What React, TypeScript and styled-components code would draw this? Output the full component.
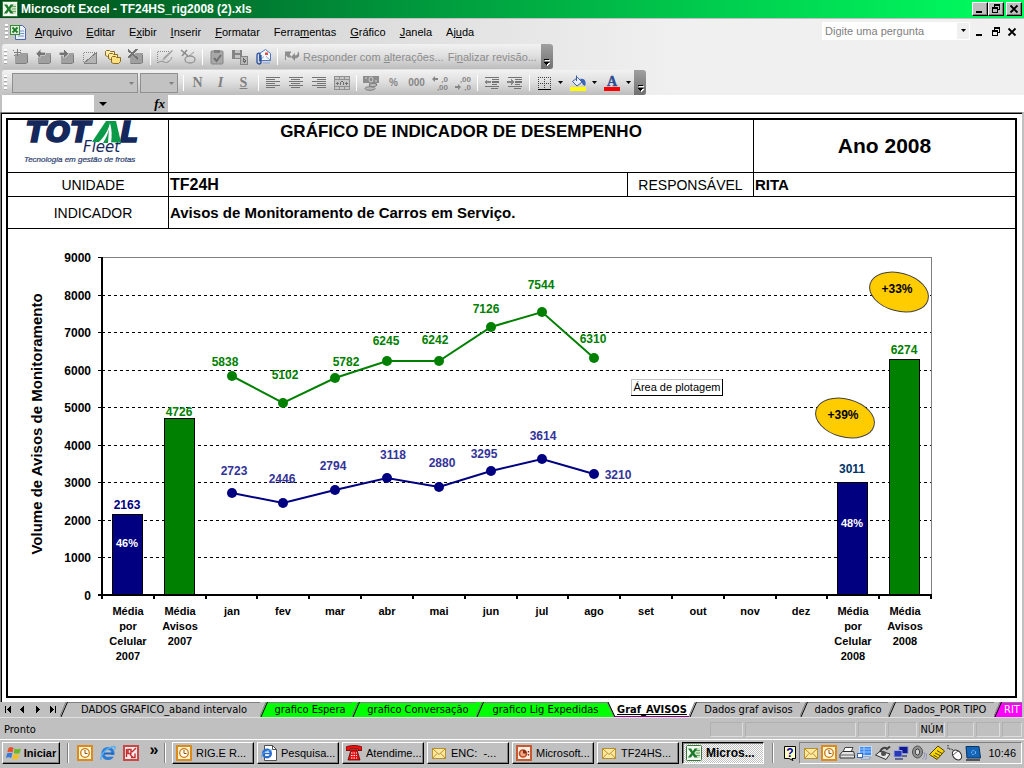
import React from "react";
import styled, { createGlobalStyle, css } from "styled-components";

const arial = `"Liberation Sans", Arial, sans-serif`;
const tahoma = `"DejaVu Sans Condensed", "DejaVu Sans", Tahoma, sans-serif`;

const GlobalStyle = createGlobalStyle`
  * { box-sizing: border-box; }
  body { margin: 0; background: #c0c0c0; color: #000; font: 11px/16px ${arial}; }
  button, input, select { font: inherit; color: inherit; margin: 0; padding: 0; border: 0; border-radius: 0; background: none; }
  button { display: flex; align-items: center; justify-content: center; white-space: nowrap; }
  svg { display: block; flex: none; }
`;

const Window = styled.div`
  min-height: 100vh;
  display: flex;
  flex-direction: column;
`;

/* ---------- title bar ---------- */

const TitleBar = styled.header`
  height: 19px;
  padding: 0 2px 0 2px;
  display: flex;
  align-items: center;
  background: linear-gradient(90deg, #004c1c 0%, #008c38 34%, #00c84c 67%, #00ff60 100%);
  border-bottom: 1px solid #c0c0c0;
`;
const Title = styled.h1`
  flex: 1;
  margin: 0 0 0 3px;
  color: #fff;
  font: bold 12px/16px ${arial};
`;
const CaptionButton = styled.button<{ $apart?: boolean }>`
  width: 16px;
  height: 14px;
  margin-left: ${(p) => (p.$apart ? 2 : 0)}px;
  background: #c0c0c0;
  border: 1px solid;
  border-color: #fff #000 #000 #fff;
  box-shadow: inset -1px -1px 0 #808080;
`;

/* ---------- menu and tool bars ---------- */

const Chrome = styled.div`
  background: linear-gradient(90deg, #c6c6c6 0%, #f0f0f0 66%);
`;
const MenuBar = styled.nav`
  height: 25px;
  display: flex;
  align-items: center;
  padding: 0 4px 0 3px;
`;
const MenuItem = styled.button`
  height: 20px;
  padding: 0 7px;
`;
const DocIcon = styled.span`
  margin: 0 2px 0 0;
`;
const Spacer = styled.span`
  flex: 1;
`;
const Ask = styled.div`
  width: 148px;
  height: 18px;
  padding: 1px;
  display: flex;
  background: #fff;
  margin: 0 2px 2px 0;
`;
const AskInput = styled.input`
  flex: 1;
  min-width: 0;
  padding: 0 2px;
  &::placeholder { color: #808080; opacity: 1; }
`;
const AskButton = styled.button`
  width: 12px;
  background: #f0f0f0;
`;
const PlainButton = styled.button`
  width: 16px;
  height: 16px;
`;
const Grip = styled.span<{ $gap?: number }>`
  width: 3px;
  height: 15px;
  margin: 0 ${(p) => p.$gap ?? 2}px 0 2px;
  background: repeating-linear-gradient(180deg, #fff 0 2px, #a8a8a8 2px 3px, transparent 3px 4px);
`;
const ToolBar = styled.div`
  width: max-content;
  height: 25px;
  margin-left: 2px;
  display: flex;
  align-items: center;
  border-radius: 3px;
  overflow: hidden;
  background: linear-gradient(180deg, #f2f2f2 0%, #dedede 50%, #bdbdbd 100%);
  & + & { margin-top: 1px; }
`;
const Tool = styled.button`
  width: 23px;
  height: 23px;
  color: #868686;
`;
const NumberTool = styled(Tool)`
  font-weight: bold;
  font-size: 10px;
`;
const CaretTool = styled.button`
  width: 11px;
  height: 23px;
`;
const TextTool = styled.button`
  height: 23px;
  margin-right: 4px;
  color: #8c8c8c;
`;
const Separator = styled.span`
  width: 1px;
  height: 16px;
  margin: 0 2px 0 3px;
  background: #fff;
`;
const BarEnd = styled.button`
  width: 12px;
  height: 25px;
  align-items: flex-end;
  padding-bottom: 3px;
  background: linear-gradient(180deg, #a0a0a0, #707070);
`;
const Combo = styled.div<{ $width: number }>`
  position: relative;
  width: ${(p) => p.$width}px;
  height: 20px;
  margin-right: 2px;
  border: 1px solid #909090;
  background: #c2c2c2;
  select { appearance: none; width: 100%; height: 100%; display: block; }
  svg { position: absolute; right: 3px; top: 8px; pointer-events: none; }
`;
const Letter = styled.span<{ $italic?: boolean; $line?: boolean }>`
  font: bold 14px/16px "Liberation Serif", "Times New Roman", serif;
  font-style: ${(p) => (p.$italic ? "italic" : "normal")};
  text-decoration: ${(p) => (p.$line ? "underline" : "none")};
  color: #808080;
`;
const FormulaBar = styled.div`
  height: 17px;
  padding-left: 2px;
  display: flex;
  background: #c0c0c0;
`;
const NameBox = styled.input`
  width: 92px;
  padding: 0 4px;
  background: #fff;
`;
const NameCaret = styled.button`
  width: 18px;
`;
const Fx = styled.button`
  width: 56px;
  justify-content: flex-end;
  padding-right: 3px;
  font: italic bold 13px/16px "Liberation Serif", "Times New Roman", serif;
`;
const Formula = styled.input`
  flex: 1;
  min-width: 0;
  padding: 0 4px;
  background: #fff;
`;

/* ---------- sheet ---------- */

const Sheet = styled.main`
  flex: 1;
  margin-right: 1px;
  background: #fff;
  border: solid #808080;
  border-width: 1px 1px 0 1px;
  border-right-color: #c0c0c0;
`;
const SheetInner = styled.div`
  padding: 4px 5px 4px 4px;
  border: solid #000;
  border-width: 1px 0 0 1px;
`;
const Report = styled.article`
  border: 2px solid #000;
`;
const HeadTable = styled.table`
  width: 100%;
  table-layout: fixed;
  border-collapse: separate;
  border-spacing: 0;
  font-family: ${arial};
  th, td {
    padding: 0;
    border-bottom: 1px solid #000;
    border-right: 1px solid #000;
    white-space: nowrap;
  }
  tr > :last-child { border-right: 0; }
  tr > th:first-child { padding-left: 10px; }
`;
const Col = styled.col<{ $width?: number }>`
  width: ${(p) => (p.$width ? `${p.$width}px` : "auto")};
`;
const Row = styled.tr<{ $height: number }>`
  height: ${(p) => p.$height}px;
`;
const LogoCell = styled.td`
  vertical-align: top;
`;
const LogoSvg = styled.svg`
  overflow: visible;
`;
const ReportTitle = styled.th`
  vertical-align: top;
  font-size: 17px;
  line-height: 24px;
`;
const Year = styled.td`
  text-align: center;
  font-weight: bold;
  font-size: 21px;
  line-height: 24px;
`;
const Label = styled.th`
  font-weight: normal;
  font-size: 14px;
  line-height: 16px;
`;
const Value = styled.td<{ $size: number }>`
  && { padding-left: 1px; }
  font-weight: bold;
  font-size: ${(p) => p.$size}px;
  line-height: 16px;
`;
const ChartSvg = styled.svg`
  width: 100%;
  height: auto;
  font-family: ${arial};
`;
const Num = styled.text<{ $end?: boolean }>`
  font: bold 12px ${arial};
  text-anchor: ${(p) => (p.$end ? "end" : "middle")};
`;
const Small = styled.text`
  font: bold 11px ${arial};
  text-anchor: middle;
`;
const AxisTitle = styled.text`
  font: bold 15px ${arial};
  text-anchor: middle;
`;
const Tip = styled.text`
  font: 11px ${arial};
  text-anchor: middle;
`;

/* ---------- sheet tabs and status ---------- */

const Tabs = styled.nav`
  height: 15px;
  display: flex;
  overflow: hidden;
  font: 11px/14px ${tahoma};
`;
const TabNav = styled.button`
  width: 15px;
  height: 15px;
`;
const TabButton = styled.button<{ $width: number; $bg: string; $active?: boolean; $light?: boolean }>`
  width: ${(p) => p.$width}px;
  height: 15px;
  background: ${(p) => p.$bg};
  color: ${(p) => (p.$light ? "#fff" : "#000")};
  border-top: 1px solid ${(p) => (p.$active ? p.$bg : "#808080")};
  ${(p) =>
    p.$active &&
    css`
      font-weight: bold;
      text-decoration: underline;
      border-bottom: 1px solid #800080;
    `}
`;
const Status = styled.footer`
  height: 22px;
  padding: 2px 2px 0 4px;
  display: flex;
  align-items: center;
  gap: 2px;
  border-top: 1px solid #e0e0e0;
  background: #c0c0c0;
  font: 11px/16px ${tahoma};
`;
const Panel = styled.span<{ $width: number }>`
  width: ${(p) => p.$width}px;
  height: 15px;
  border: 1px solid;
  border-color: #b0b0b0 #dcdcdc #dcdcdc #b0b0b0;
  line-height: 14px;
  text-align: center;
`;

/* ---------- task bar ---------- */

const TaskBar = styled.div`
  height: 29px;
  padding: 2px 2px 4px;
  display: flex;
  align-items: center;
  background: #c0c0c0;
  border-top: 1px solid #fff;
`;
const raised = css`
  border: 1px solid;
  border-color: #fff #000 #000 #fff;
  box-shadow: inset -1px -1px 0 #808080;
`;
const Start = styled.button`
  width: 58px;
  height: 22px;
  gap: 2px;
  font-weight: bold;
  ${raised}
`;
const Divider = styled.span<{ $left: number; $right: number }>`
  width: 2px;
  height: 20px;
  margin: 0 ${(p) => p.$right}px 0 ${(p) => p.$left}px;
  border-left: 1px solid #808080;
  border-right: 1px solid #fff;
`;
const Quick = styled.div`
  display: flex;
  align-items: center;
  gap: 7px;
`;
const More = styled.button`
  width: 22px;
  height: 20px;
  padding-left: 8px;
  align-items: flex-start;
  font: bold 16px/14px ${arial};
`;
const Tasks = styled.div`
  display: flex;
  gap: 3px;
`;
const Task = styled.button<{ $active?: boolean }>`
  width: 82px;
  height: 22px;
  padding: 0 3px;
  gap: 4px;
  justify-content: flex-start;
  white-space: pre;
  ${raised}
  ${(p) =>
    p.$active &&
    css`
      font-weight: bold;
      font-size: 12px;
      border-color: #000 #fff #fff #000;
      box-shadow: inset 1px 1px 0 #808080;
      background: repeating-conic-gradient(#fff 0 25%, #c0c0c0 0 50%) 0 0 / 2px 2px;
    `}
`;
const Tray = styled.div`
  height: 22px;
  margin-left: 3px;
  padding: 0 5px 0 3px;
  display: flex;
  align-items: center;
  gap: 2px;
  border: 1px solid;
  border-color: #808080 #fff #fff #808080;
`;
const Clock = styled.time`
  margin-left: 5px;
`;

/* ---------- icons ---------- */

type IconProps = { children: React.ReactNode; w?: number; h?: number; smooth?: boolean };
const Icon = ({ children, w = 16, h = 16, smooth }: IconProps) => (
  <svg width={w} height={h} viewBox={`0 0 ${w} ${h}`} fill="none" shapeRendering={smooth ? undefined : "crispEdges"} aria-hidden="true">
    {children}
  </svg>
);
const Caret = ({ color = "#000", w = 5 }: { color?: string; w?: number }) => (
  <svg width={w} height={w > 5 ? 4 : 3} viewBox="0 0 6 3" preserveAspectRatio="none" aria-hidden="true">
    <path d="M0 0h6L3 3z" fill={color} />
  </svg>
);
const MinGlyph = () => (<Icon w={10} h={10}><path d="M1 7h6v2H1z" fill="#000" /></Icon>);
const RestoreGlyph = () => (
  <Icon w={10} h={10}>
    <path d="M3 0h6v6H7V5h1V2H4v1H3z" fill="#000" />
    <path d="M1 3h6v6H1zM2 5v3h4V5z" fill="#000" fillRule="evenodd" />
  </Icon>
);
const CloseGlyph = () => (
  <Icon w={10} h={10} smooth><path d="M1.5 1.5l7 7M8.500 1.500l-7 7" stroke="#000" strokeWidth="1.800" /></Icon>
);
const ExcelIcon = () => (
  <Icon smooth>
    <rect x=".5" y=".5" width="15" height="15" rx="1" fill="#f4faf2" stroke="#3a7a3a" />
    <path d="M9 3h5v10H9z" fill="#cfe6c8" />
    <path d="M10 5.500h4M10 8h4M10 10.500h4" stroke="#6fa568" />
    <path d="M2 3.500h3.200l1.600 2.700 1.700-2.700h3L8.300 8l3.400 4.500H8.300L6.700 9.900 5 12.500H1.800L5.200 8z" fill="#1d7b2c" />
  </Icon>
);
const DocExcelIcon = () => (
  <Icon smooth>
    <path d="M5.500 1.500h7l3 3v11h-10z" fill="#e8eefb" stroke="#4a68a8" />
    <path d="M8 7h6M8 9.500h6M8 12h6" stroke="#7a94c8" />
    <rect x=".5" y="1.500" width="9" height="9" fill="#dff0d8" stroke="#3a8a3a" />
    <path d="M2.500 3.500l5 5M7.500 3.500l-5 5" stroke="#1d7b2c" strokeWidth="1.800" />
  </Icon>
);
const Note = ({ kind }: { kind: "new" | "prev" | "next" | "del" }) => (
  <Icon>
    <path d="M2 5h4l1-1h8v9l-2 2H2z" fill="#a0a0a0" />
    <path d="M3 14.500h10M14.500 6v8" stroke="#7e7e7e" />
    {kind === "new" && <path d="M0 1h1v1H0zM4 0h1v3h3v1H5v3H4V4H1V3h3zM7 1h1v1H7zM1 6h1v1H1z" fill="#7c7c7c" />}
    {kind === "prev" && <path d="M0 4.500L4.500 0v3H9v3H4.500v3z" fill="#747474" stroke="#e0e0e0" strokeWidth=".6" />}
    {kind === "next" && <path d="M9 4.500L4.500 0v3H0v3h4.500v3z" fill="#747474" stroke="#e0e0e0" strokeWidth=".6" />}
    {kind === "del" && <path d="M0 1l10 9M9 0L0 9" stroke="#747474" strokeWidth="1.800" />}
  </Icon>
);
const ShowNote = () => (
  <Icon>
    <path d="M1.500 13V3.500H14" stroke="#8a8a8a" strokeDasharray="1 1" />
    <path d="M15 3v11H2z" fill="#b4b4b4" /><path d="M15 3L2 14M14.500 4v10H2" stroke="#808080" />
  </Icon>
);
const ShowAllNotes = () => (
  <Icon smooth>
    <path d="M.5 2.500l1-1h3l1 1h4v5h-7l-2-1z" fill="#fff0b0" stroke="#8a6a20" />
    <path d="M3.500 5.500l1-1h3l1 1h4v5h-7l-2-1z" fill="#ffe9a0" stroke="#8a6a20" />
    <path d="M6.500 8.500l1-1h3l1 1h4v4l-2 2h-5l-2-1z" fill="#ffe080" stroke="#8a6a20" />
  </Icon>
);
const InkShape = () => (
  <Icon smooth>
    <path d="M.5 14V2.500H12" stroke="#8a8a8a" strokeDasharray="1 1" />
    <path d="M15 1L7 8l-2 4 3-2 8-8z" fill="#a2a2a2" /><path d="M1 14c3-4 7 1 10-1s3-3 4-5" stroke="#909090" />
  </Icon>
);
const InkErase = () => (
  <Icon smooth>
    <path d="M1 1l7 6M7 1L2 7" stroke="#8a8a8a" strokeWidth="1.500" />
    <ellipse cx="10" cy="10.500" rx="5" ry="3.500" stroke="#949494" strokeWidth="1.300" />
    <path d="M9 7l5-4" stroke="#949494" />
  </Icon>
);
const TaskIcon = () => (
  <Icon smooth>
    <rect x="2" y="2" width="12" height="13" rx="1" fill="#a8a8a8" stroke="#868686" /><rect x="5" y="1" width="6" height="3" fill="#808080" />
    <path d="M5 9l2.500 3L12 6" stroke="#707070" strokeWidth="2" />
  </Icon>
);
const UpdateFile = () => (
  <Icon>
    <path d="M0 1h10v9H0z" fill="#848484" /><path d="M3 1h5v3H3zM3 6h5v3H3z" fill="#c4c4c4" />
    <path d="M8 7h7v8H8z" fill="#b8b8b8" stroke="#868686" /><path d="M11 9v3h3M12 10l2 2-2 2" stroke="#686868" />
  </Icon>
);
const MailClip = () => (
  <Icon smooth>
    <path d="M4.500 4.500l6-4 5 4v7h-11z" fill="#f4f8ff" stroke="#5078c0" /><path d="M5 11l4-3.500M15 11l-4-3.500" stroke="#88a4d8" />
    <rect x="10" y="3.500" width="3" height="2.500" fill="#e05040" />
    <path d="M6 6v7a2 2 0 0 1-4 0V6a2 2 0 0 1 3-1.500v8" stroke="#2850a0" strokeWidth="1.300" />
    <path d="M8 14h7" stroke="#88a4d8" />
  </Icon>
);
const ReplyFlag = () => (
  <Icon smooth>
    <path d="M1 3h6l-2 2 2 3H4L1.500 5v6" fill="#8c8c8c" stroke="#8c8c8c" /><path d="M7 8l4-4v2.500c2 0 3-1.500 3-4.500 3 5 0 7.500-3 7.500V12z" fill="#8c8c8c" />
  </Icon>
);
const AlignIcon = ({ at }: { at: "left" | "center" | "right" }) => (
  <Icon>
    {[0, 1, 2, 3, 4, 5].map((i) => {
      const w = i % 2 ? 9 : 14;
      const x = at === "left" ? 1 : at === "center" ? 1 + Math.floor((14 - w) / 2) : 15 - w;
      return <rect key={i} x={x} y={2 + i * 2} width={w} height="1" fill="#747474" />;
    })}
  </Icon>
);
const MergeIcon = () => (
  <Icon>
    <path d="M0 1h16v14H0z" fill="#909090" /><path d="M1 2h4v2H1zM6 2h4v2H6zM11 2h4v2h-4zM1 12h4v2H1zM6 12h4v2H6zM11 12h4v2h-4zM1 5h14v6H1z" fill="#c6c6c6" />
    <path d="M2 8.500h3M11 8.500h3M3.500 7v3M12.500 7v3M6 10l1.500-4h1L10 10" stroke="#707070" />
  </Icon>
);
const MoneyIcon = () => (
  <Icon smooth>
    <path d="M0 1h16v7H0z" fill="#8c8c8c" /><ellipse cx="8" cy="4.500" rx="2" ry="2.500" stroke="#d0d0d0" /><path d="M2 3h2M12 6h2" stroke="#d0d0d0" />
    <path d="M6 8h8l-1 3H6z" fill="#a0a0a0" /><ellipse cx="10" cy="10" rx="4" ry="1.500" fill="#c0c0c0" stroke="#7c7c7c" /><ellipse cx="7" cy="13.500" rx="5" ry="1.800" fill="#b8b8b8" stroke="#7c7c7c" />
  </Icon>
);
const IndentIcon = ({ out }: { out?: boolean }) => (
  <Icon>
    <path d="M1 2h14v1H1zM8 4h7v1H8zM8 6h7v2H8zM8 9h5v1H8zM1 11h14v1H1zM7 13h7v1H7z" fill="#747474" />
    <path d={out ? "M0 7l3-3v2h4v2H3v2z" : "M7 7L4 4v2H0v2h4v2z"} fill="#868686" />
  </Icon>
);
const Decimals = ({ more }: { more?: boolean }) => (
  <svg width="16" height="16" viewBox="0 0 16 16" fill="#868686" fontFamily="Liberation Sans, Arial, sans-serif" fontSize="8" fontWeight="bold" aria-hidden="true">
    <path d={more ? "M0 4l3-3v2h3v2H3v2z" : "M6 12l-3-3v2H0v2h3v2z"} />
    <text x="16" y="7" textAnchor="end">{more ? ",0" : ",00"}</text>
    <text x="16" y="15" textAnchor="end">{more ? ",00" : ",0"}</text>
  </svg>
);
const BorderIcon = () => (
  <Icon>
    <path d="M2 2.500h13M2 8.500h13M2.500 2v12M8.500 2v12M14.500 2v12" stroke="#404040" strokeDasharray="1 1" /><path d="M2 14h13v1H2z" fill="#000" />
  </Icon>
);
const FillIcon = () => (
  <Icon smooth>
    <path d="M2.500 6.500l5-4 4.500 4.500-5 4z" fill="#e6eefc" stroke="#3a5a9a" /><path d="M6.500 6V.5" stroke="#3a5a9a" /><path d="M10 4c4-1 7 2 5 7-2-1-3-2-3-4z" fill="#3a64b8" />
    <path d="M0 12h16v4H0z" fill="#ffff00" />
  </Icon>
);
const FontColorIcon = () => (
  <svg width="16" height="16" viewBox="0 0 16 16" aria-hidden="true">
    <text x="8" y="11" textAnchor="middle" fontFamily="Liberation Serif, Times New Roman, serif" fontSize="14" fontWeight="bold" fill="#2c4c94" stroke="#2c4c94" strokeWidth=".4" overflow="visible">A</text>
    <path d="M0 12h16v4H0z" fill="#f00" />
  </svg>
);
const BarEndGlyph = () => (
  <Icon w={7} h={8}><path d="M2 2h5v1H2zM2 5h5L4.500 8z" fill="#fff" /><path d="M1 1h5v1H1zM1 4h5L3.500 7z" fill="#000" /></Icon>
);
const WindowsFlag = () => (
  <Icon smooth>
    <path d="M2.500 3c2-1.500 3.500-1.300 5 0L6.500 7.500C5 6.500 3 6.300 1.300 7.300z" fill="#e8502a" />
    <path d="M8.500 3.500c2 1 4 1 6.500 0l-1.300 4.500c-2 1-4 .9-6 0z" fill="#6cb82c" />
    <path d="M1 8.400c2-1 4-.8 5.300.2L5.200 13c-1.500-1-3.500-1-5.200 0z" fill="#3a78d8" />
    <path d="M7.300 9c2 1 4 1 6 0L12 13.700c-2 1-4 .8-5.800 0z" fill="#f4c020" />
  </Icon>
);
const OutlookIcon = () => (
  <Icon smooth>
    <rect x="1" y="1" width="14" height="14" fill="#fff2cc" stroke="#dc8a1c" strokeWidth="2" /><circle cx="8" cy="8" r="4.300" fill="#fffbea" stroke="#c87a18" strokeWidth="1.300" />
    <path d="M8 5v3.500h2.500" stroke="#905010" />
  </Icon>
);
const IeIcon = () => (
  <Icon smooth>
    <circle cx="8" cy="8.500" r="5" stroke="#2a7cd8" strokeWidth="3.200" /><path d="M4 8.500h9" stroke="#1c64c0" strokeWidth="2" />
    <path d="M10 10h6v1.700h-6z" fill="#c0c0c0" /><path d="M1.500 15C-1 12 5 3 14 1.500c2 0 1 2 0 3" stroke="#5cb0f0" strokeWidth="1.500" />
  </Icon>
);
const IePageIcon = () => (
  <Icon smooth>
    <path d="M3.500.5h8l4 4v11h-12z" fill="#fff" stroke="#505050" /><path d="M11.500.5v4h4" stroke="#505050" />
    <circle cx="6" cy="8.500" r="3.800" stroke="#2a6cd0" strokeWidth="2.400" /><path d="M3 8.500h6" stroke="#2a6cd0" strokeWidth="1.500" /><path d="M0 13c0-4 5-8 11-8" stroke="#58a8e8" />
  </Icon>
);
const RedBoardIcon = () => (
  <Icon smooth>
    <rect x="1" y="1" width="14" height="14" fill="#f8e8e8" stroke="#c84848" strokeWidth="2" />
    <path d="M3.500 4v8M5 4.500h3v4H5zM9 7l4-4M7 9.500l3 3M12 8.500v4H8" stroke="#c03030" strokeWidth="1.400" />
  </Icon>
);
const PhoneIcon = () => (
  <Icon smooth>
    <path d="M0 5.500V2c4-2 12-2 16 0v3.500h-4V4H4v1.500z" fill="#f01010" stroke="#600" strokeWidth=".8" /><path d="M5 5h6l3 10H2z" fill="#e81010" stroke="#600" strokeWidth=".8" />
    <path d="M5 8h6M5 10.500h6M5 13h6" stroke="#fff" strokeDasharray="1.500 1" />
  </Icon>
);
const MailIcon = () => (
  <Icon smooth>
    <rect x="1.500" y="3.500" width="13" height="10" fill="#ffe9a0" stroke="#b89030" /><path d="M2 4l6 5.500L14 4M2 13l4-4.500M14 13l-4-4.500" stroke="#b89030" />
  </Icon>
);
const PptIcon = () => (
  <Icon smooth>
    <rect x="1" y="1" width="14" height="14" fill="#fdeee6" stroke="#c85a30" strokeWidth="2" /><circle cx="7" cy="8.500" r="3.500" stroke="#c04c20" strokeWidth="1.600" fill="#f0a888" /><path d="M7 8.500V5a3.500 3.500 0 0 1 3.500 3.500z" fill="#802c10" />
    <path d="M12.500 6v1.500M12.500 9v1.500" stroke="#802c10" strokeWidth="1.500" />
  </Icon>
);
const HelpIcon = () => (
  <svg width="12" height="16" viewBox="0 0 12 16" aria-hidden="true">
    <path d="M.5 1.500h11v12H8l1 2-4-2H.5z" fill="#ffffc0" stroke="#000" />
    <text x="6" y="12" textAnchor="middle" fontFamily="Liberation Sans, Arial, sans-serif" fontSize="12" fontWeight="bold" fill="#00a">?</text>
  </svg>
);
const PrinterIcon = () => (
  <Icon smooth>
    <path d="M4 7l2-4.500h8L12 7z" fill="#fff" stroke="#404040" /><path d="M1 9.500l2.500-3h11l1 3v3.500H1z" fill="#e4e4e4" stroke="#303030" /><path d="M1 10h14.500" stroke="#606060" />
  </Icon>
);
const ScreenIcon = () => (
  <Icon smooth>
    <rect x="2.500" y="1.500" width="12" height="9" fill="#3a88f0" stroke="#c8dcf8" /><path d="M3 4h11M3 7h11M7 2v8" stroke="#9cc8ff" /><path d="M5 12h8v2H4z" fill="#e8f0fc" stroke="#5078a8" strokeWidth=".6" />
    <rect x=".5" y="8.500" width="5" height="4" fill="#fff" stroke="#3a68b8" />
  </Icon>
);
const ModemIcon = () => (
  <Icon smooth>
    <path d="M.5 10l5-4 9.500 3-4 5.500z" fill="#e8e8e8" stroke="#303030" /><path d="M5 7c2-5 6-5 7-3l3-2.500" stroke="#404040" strokeWidth="2" /><circle cx="8.500" cy="8.500" r="2.500" fill="#505050" />
  </Icon>
);
const NetworkIcon = () => (
  <Icon smooth>
    <path d="M6 1.500h9v7H6z" fill="#101890" stroke="#8890c8" /><path d="M1 5.500h8V12H1z" fill="#2838b8" stroke="#a0a8d8" /><path d="M2 14h8M9 11h5" stroke="#606890" strokeWidth="2" />
  </Icon>
);
const SpeakerIcon = () => (
  <Icon smooth>
    <ellipse cx="6.500" cy="7" rx="5" ry="6" fill="#909090" stroke="#505050" /><ellipse cx="6.500" cy="7" rx="2.200" ry="3" fill="#d8d8d8" stroke="#404040" /><path d="M11 14c3-1 3-5 2-7M14 15c2-2 2-5 1-7" stroke="#9090b8" />
  </Icon>
);
const TagIcon = () => (
  <Icon smooth>
    <path d="M.5 9.500L9 1l6.500 5L8 14.500z" fill="#f8d800" stroke="#504000" /><path d="M6 8l5 2.500M8 5.500l5 3M4.500 10l4 2.500" stroke="#504000" />
  </Icon>
);
const MouseIcon = () => (
  <Icon smooth>
    <path d="M1 0v4h4l2 3" stroke="#202020" strokeDasharray="1.500 1" /><ellipse cx="10" cy="10" rx="4" ry="5.500" fill="#fff" stroke="#303030" transform="rotate(-40 10 10)" /><path d="M6 10l5-4" stroke="#606060" />
  </Icon>
);
const ChipIcon = () => (
  <Icon smooth>
    <path d="M1 1.500h13l1.500 11.500H2z" fill="#1464b8" stroke="#0a3460" /><circle cx="8.500" cy="7.500" r="2" stroke="#9cd0ff" strokeDasharray="1.500 1" /><path d="M1 15h14" stroke="#303030" strokeWidth="1.500" />
  </Icon>
);

const Logo = () => (
  <LogoSvg width="160" height="52" viewBox="8 120 160 52" role="img" aria-label="Total Fleet">
    <g fill="#14285c" fontFamily="DejaVu Sans, Verdana, sans-serif">
      <g fontSize="29" fontWeight="bold" fontStyle="italic" stroke="#14285c" strokeWidth="1.600">
        <text x="26" y="142">TOT</text>
        <text x="120" y="142">L</text>
      </g>
      <text x="83" y="152" fontSize="15" fontStyle="italic">Fleet</text>
    </g>
    <path d="M92 142L106 121h10l5 21.500z" fill="#0a9a48" />
    <path d="M98 143c6-6 10-12 12-20 2 7 2 13 1 20z" fill="#fff" />
    <path d="M103 143c3-5 5-9 6-14l-1 14z" fill="#0a9a48" />
    <text x="24" y="162" fontSize="8" fontStyle="italic" fill="#2c4070" stroke="#2c4070" strokeWidth=".2" fontFamily="Liberation Sans, Arial, sans-serif">
      Tecnologia em gestão de frotas
    </text>
  </LogoSvg>
);

/* ---------- chart ---------- */

const GREEN = "#008000";
const NAVY = "#000080";
const LILAC = "#333399";
const LEFT = 102;
const RIGHT = 931;
const BASE = 595;
const STEP = (RIGHT - LEFT) / 16;
const yOf = (v: number) => Math.round(BASE - v * 0.03755);
const xOf = (i: number) => Math.round(LEFT + STEP * (i + 0.5));

const categories = [
  ["Média", "por", "Celular", "2007"], ["Média", "Avisos", "2007"],
  ["jan"], ["fev"], ["mar"], ["abr"], ["mai"], ["jun"], ["jul"], ["ago"], ["set"], ["out"], ["nov"], ["dez"],
  ["Média", "por", "Celular", "2008"], ["Média", "Avisos", "2008"],
];
const scale = [0, 1000, 2000, 3000, 4000, 5000, 6000, 7000, 8000, 9000];
type Point = { v: number; x: number; y: number };
const warnings: Point[] = [
  { v: 5838, x: 225, y: 366 }, { v: 5102, x: 285, y: 379 }, { v: 5782, x: 346, y: 366 }, { v: 6245, x: 386, y: 345 },
  { v: 6242, x: 435, y: 344 }, { v: 7126, x: 486, y: 313 }, { v: 7544, x: 541, y: 289 }, { v: 6310, x: 593, y: 343 },
];
const phones: Point[] = [
  { v: 2723, x: 234, y: 475 }, { v: 2446, x: 282, y: 483 }, { v: 2794, x: 333, y: 470 }, { v: 3118, x: 393, y: 459 },
  { v: 2880, x: 442, y: 467 }, { v: 3295, x: 484, y: 458 }, { v: 3614, x: 543, y: 440 }, { v: 3210, x: 618, y: 479 },
];
const bars = [
  { i: 0, v: 2163, fill: NAVY, ink: NAVY, y: 509, share: "46%", shareY: 547 },
  { i: 1, v: 4726, fill: GREEN, ink: GREEN, y: 416 },
  { i: 14, v: 3011, fill: NAVY, ink: "#003366", y: 473, share: "48%", shareY: 527 },
  { i: 15, v: 6274, fill: GREEN, ink: GREEN, y: 354 },
];
const growth = [
  { text: "+33%", x: 899, y: 292 },
  { text: "+39%", x: 845, y: 418 },
];

const Series = ({ points, color, ink }: { points: Point[]; color: string; ink: string }) => (
  <g>
    <polyline fill="none" stroke={color} strokeWidth="2" points={points.map((p, i) => `${xOf(i + 2)},${yOf(p.v)}`).join(" ")} />
    {points.map((p, i) => (
      <g key={p.v}>
        <circle cx={xOf(i + 2)} cy={yOf(p.v)} r="5" fill={color} />
        <Num x={p.x} y={p.y} fill={ink}>{p.v}</Num>
      </g>
    ))}
  </g>
);

const Chart = () => (
  <ChartSvg viewBox="8 229 1007 467" role="img" aria-label="Volume de Avisos de Monitoramento">
    <g shapeRendering="crispEdges">
      <path d={`M${LEFT} 257.500H${RIGHT + 0.5}V${BASE}`} fill="none" stroke="#808080" />
      {scale.slice(1, 9).map((v) => (
        <path key={v} d={`M${LEFT} ${yOf(v) + 0.5}H${RIGHT}`} stroke="#000" strokeDasharray="3 3" />
      ))}
      {bars.map((b) => (
        <rect key={b.i} x={xOf(b.i) - 15.5} y={yOf(b.v) + 0.5} width="30" height={BASE - yOf(b.v)} fill={b.fill} stroke="#000" />
      ))}
      <path d={`M${LEFT} 257V596M${LEFT - 1} ${BASE}H${RIGHT + 1}`} stroke="#000" strokeWidth="2" />
      {categories.concat([[]]).map((_, i) => (
        <rect key={i} x={Math.round(LEFT + i * STEP) - 1} y={BASE} width="2" height="4" />
      ))}
      {scale.map((v) => (
        <rect key={v} x={LEFT - 4} y={v ? yOf(v) : BASE - 1} width="4" height={v ? 1 : 2} />
      ))}
    </g>
    {scale.map((v) => (
      <Num key={v} $end x="91" y={yOf(v) + 5}>{v}</Num>
    ))}
    {categories.map((lines, i) =>
      lines.map((line, j) => (
        <Small key={`${i}-${j}`} x={xOf(i)} y={615 + j * 15}>{line}</Small>
      ))
    )}
    <AxisTitle transform="translate(42 424) rotate(-90)">Volume de Avisos de Monitoramento</AxisTitle>
    <Series points={warnings} color={GREEN} ink={GREEN} />
    <Series points={phones} color={NAVY} ink={LILAC} />
    {bars.map((b) => (
      <g key={b.i}>
        <Num x={xOf(b.i) - 1} y={b.y} fill={b.ink}>{b.v}</Num>
        {b.share && <Small x={xOf(b.i) - 1} y={b.shareY} fill="#fff">{b.share}</Small>}
      </g>
    ))}
    {growth.map((g) => (
      <g key={g.text}>
        <ellipse cx={g.x} cy={g.y} rx="30" ry="19" transform={`rotate(15 ${g.x} ${g.y})`} fill="#ffcc00" stroke="#404040" />
        <Num x={g.x - 2} y={g.y + 1}>{g.text}</Num>
      </g>
    ))}
    <g shapeRendering="crispEdges">
      <rect x="631.500" y="379.500" width="91" height="16" fill="#fff" stroke="#000" />
      <path d="M631.500 395V379.500H722" fill="none" stroke="#c0c0c0" />
    </g>
    <Tip x="677" y="391">Área de plotagem</Tip>
  </ChartSvg>
);

/* ---------- sheet tabs ---------- */

const GRAY = "#c0c0c0";
const LIME = "#00ff00";
type TabSpec = { name: string; width: number; bg: string; active?: boolean; light?: boolean };
const tabs: TabSpec[] = [
  { name: "DADOS GRAFICO_aband intervalo", width: 192, bg: GRAY },
  { name: "grafico Espera", width: 84, bg: LIME },
  { name: "grafico Conversação", width: 116, bg: LIME },
  { name: "grafico Lig Expedidas", width: 123, bg: LIME },
  { name: "Graf_AVISOS", width: 74, bg: "#fff", active: true },
  { name: "Dados graf avisos", width: 103, bg: GRAY },
  { name: "dados grafico", width: 80, bg: GRAY },
  { name: "Dados_POR TIPO", width: 98, bg: GRAY },
  { name: "RIT", width: 20, bg: "#ff00ff", light: true },
];
const Slant = ({ left, right, back }: { left: string; right: string; back?: boolean }) => (
  <svg width="8" height="15" viewBox="0 0 8 15" aria-hidden="true">
    <rect width="8" height="15" fill={left} />
    <path d={back ? "M1 0h7v15z" : "M7 0h1v15H0z"} fill={right} />
    <path d={back ? "M0 0l7 15" : "M6 0L0 14"} stroke="#808080" fill="none" />
    <path d={back ? "M1 0l7 15" : "M7.500 0L1 15"} stroke="#000" fill="none" />
  </svg>
);

const menus: [string, string, string][] = [
  ["", "A", "rquivo"], ["", "E", "ditar"], ["E", "x", "ibir"], ["", "I", "nserir"], ["", "F", "ormatar"],
  ["Ferra", "m", "entas"], ["", "G", "ráfico"], ["", "J", "anela"], ["Aj", "u", "da"],
];
const navPaths = ["M1 0h1v7H1zM7 0v7L3 3.500z", "M5 0v7L1 3.500z", "M2 0v7l4-3.500z", "M1 0v7l4-3.500zM6 0h1v7H6z"];
const navNames = ["Primeira", "Anterior", "Próxima", "Última"];
const tasks: { text: string; icon: React.ReactNode; active?: boolean }[] = [
  { text: "RIG.E R...", icon: <OutlookIcon /> },
  { text: "Pesquisa...", icon: <IePageIcon /> },
  { text: "Atendime...", icon: <PhoneIcon /> },
  { text: "ENC:  -...", icon: <MailIcon /> },
  { text: "Microsoft...", icon: <PptIcon /> },
  { text: "TF24HS...", icon: <MailIcon /> },
  { text: "Micros...", icon: <ExcelIcon />, active: true },
];

export default function App() {
  return (
    <Window>
      <GlobalStyle />
      <TitleBar>
        <ExcelIcon />
        <Title>Microsoft Excel - TF24HS_rig2008 (2).xls</Title>
        <CaptionButton aria-label="Minimizar"><MinGlyph /></CaptionButton>
        <CaptionButton aria-label="Restaurar"><RestoreGlyph /></CaptionButton>
        <CaptionButton $apart aria-label="Fechar"><CloseGlyph /></CaptionButton>
      </TitleBar>
      <Chrome>
        <MenuBar>
          <Grip />
          <DocIcon><DocExcelIcon /></DocIcon>
          {menus.map(([a, b, c]) => (
            <MenuItem key={a + b + c}><span>{a}<u>{b}</u>{c}</span></MenuItem>
          ))}
          <Spacer />
          <Ask>
            <AskInput aria-label="Pergunta" placeholder="Digite uma pergunta" />
            <AskButton aria-label="Perguntas recentes"><Caret /></AskButton>
          </Ask>
          <PlainButton aria-label="Minimizar pasta"><MinGlyph /></PlainButton>
          <PlainButton aria-label="Restaurar pasta"><RestoreGlyph /></PlainButton>
          <PlainButton aria-label="Fechar pasta"><CloseGlyph /></PlainButton>
        </MenuBar>
        <ToolBar>
          <Grip />
          <Tool aria-label="Novo comentário"><Note kind="new" /></Tool>
          <Tool aria-label="Comentário anterior"><Note kind="prev" /></Tool>
          <Tool aria-label="Próximo comentário"><Note kind="next" /></Tool>
          <Tool aria-label="Mostrar comentário"><ShowNote /></Tool>
          <Tool aria-label="Mostrar todos os comentários"><ShowAllNotes /></Tool>
          <Tool aria-label="Excluir comentário"><Note kind="del" /></Tool>
          <Separator />
          <Tool aria-label="Mostrar tinta"><InkShape /></Tool>
          <Tool aria-label="Excluir tinta"><InkErase /></Tool>
          <Separator />
          <Tool aria-label="Criar tarefa"><TaskIcon /></Tool>
          <Tool aria-label="Atualizar arquivo"><UpdateFile /></Tool>
          <Tool aria-label="Enviar como anexo"><MailClip /></Tool>
          <Separator />
          <Tool aria-label="Responder"><ReplyFlag /></Tool>
          <TextTool><span>Responder com <u>a</u>lterações...</span></TextTool>
          <TextTool><span>Fi<u>n</u>alizar revisão...</span></TextTool>
          <BarEnd aria-label="Opções da barra"><BarEndGlyph /></BarEnd>
        </ToolBar>
        <ToolBar>
          <Grip $gap={5} />
          <Combo $width={126}><select aria-label="Fonte" disabled /><Caret color="#808080" /></Combo>
          <Combo $width={38}><select aria-label="Tamanho" disabled /><Caret color="#808080" /></Combo>
          <Separator />
          <Tool aria-label="Negrito"><Letter>N</Letter></Tool>
          <Tool aria-label="Itálico"><Letter $italic>I</Letter></Tool>
          <Tool aria-label="Sublinhado"><Letter $line>S</Letter></Tool>
          <Separator />
          <Tool aria-label="Alinhar à esquerda"><AlignIcon at="left" /></Tool>
          <Tool aria-label="Centralizar"><AlignIcon at="center" /></Tool>
          <Tool aria-label="Alinhar à direita"><AlignIcon at="right" /></Tool>
          <Tool aria-label="Mesclar e centralizar"><MergeIcon /></Tool>
          <Separator />
          <Tool aria-label="Moeda"><MoneyIcon /></Tool>
          <NumberTool>%</NumberTool>
          <NumberTool>000</NumberTool>
          <Tool aria-label="Aumentar casas decimais"><Decimals more /></Tool>
          <Tool aria-label="Diminuir casas decimais"><Decimals /></Tool>
          <Separator />
          <Tool aria-label="Diminuir recuo"><IndentIcon out /></Tool>
          <Tool aria-label="Aumentar recuo"><IndentIcon /></Tool>
          <Separator />
          <Tool aria-label="Bordas"><BorderIcon /></Tool>
          <CaretTool aria-label="Tipos de borda"><Caret /></CaretTool>
          <Tool aria-label="Cor do preenchimento"><FillIcon /></Tool>
          <CaretTool aria-label="Cores do preenchimento"><Caret /></CaretTool>
          <Tool aria-label="Cor da fonte"><FontColorIcon /></Tool>
          <CaretTool aria-label="Cores da fonte"><Caret /></CaretTool>
          <BarEnd aria-label="Opções da barra"><BarEndGlyph /></BarEnd>
        </ToolBar>
        <FormulaBar>
          <NameBox aria-label="Caixa de nome" />
          <NameCaret aria-label="Lista de nomes"><Caret w={8} /></NameCaret>
          <Fx>fx</Fx>
          <Formula aria-label="Barra de fórmulas" />
        </FormulaBar>
      </Chrome>

      <Sheet>
        <SheetInner>
          <Report>
            <HeadTable>
              <colgroup>
                <Col $width={161} />
                <Col />
                <Col $width={126} />
                <Col $width={261} />
              </colgroup>
              <tbody>
                <Row $height={53}>
                  <LogoCell><Logo /></LogoCell>
                  <ReportTitle colSpan={2}>GRÁFICO DE INDICADOR DE DESEMPENHO</ReportTitle>
                  <Year>Ano 2008</Year>
                </Row>
                <Row $height={24}>
                  <Label scope="row">UNIDADE</Label>
                  <Value $size={16}>TF24H</Value>
                  <Label scope="row">RESPONSÁVEL</Label>
                  <Value $size={15}>RITA</Value>
                </Row>
                <Row $height={32}>
                  <Label scope="row">INDICADOR</Label>
                  <Value $size={15} colSpan={3}>Avisos de Monitoramento de Carros em Serviço.</Value>
                </Row>
              </tbody>
            </HeadTable>
            <Chart />
          </Report>
        </SheetInner>
      </Sheet>

      <Tabs aria-label="Planilhas">
        {navPaths.map((d, i) => (
          <TabNav key={d} aria-label={navNames[i]}><Icon w={8} h={7}><path d={d} fill="#000" /></Icon></TabNav>
        ))}
        {tabs.map((t, i) => (
          <React.Fragment key={t.name}>
            <Slant left={i ? tabs[i - 1].bg : GRAY} right={t.bg} back={t.active} />
            <TabButton $width={t.width} $bg={t.bg} $active={t.active} $light={t.light}>{t.name}</TabButton>
          </React.Fragment>
        ))}
      </Tabs>
      <Status>
        <span>Pronto</span>
        <Spacer />
        <Panel $width={33} />
        <Panel $width={111} />
        <Panel $width={28} />
        <Panel $width={29} />
        <Panel $width={26}>NÚM</Panel>
        <Panel $width={27} />
        <Panel $width={24} />
        <Panel $width={20} />
      </Status>
      <TaskBar>
        <Start><WindowsFlag />Iniciar</Start>
        <Divider $left={7} $right={8} />
        <Quick>
          <OutlookIcon />
          <IeIcon />
          <RedBoardIcon />
        </Quick>
        <More aria-label="Mais atalhos">»</More>
        <Divider $left={3} $right={6} />
        <Tasks>
          {tasks.map((t) => (
            <Task key={t.text} $active={t.active}>{t.icon}{t.text}</Task>
          ))}
        </Tasks>
        <Spacer />
        <Divider $left={0} $right={10} />
        <HelpIcon />
        <Tray>
          <MailIcon />
          <OutlookIcon />
          <PrinterIcon />
          <ScreenIcon />
          <ModemIcon />
          <NetworkIcon />
          <SpeakerIcon />
          <TagIcon />
          <MouseIcon />
          <ChipIcon />
          <Clock>10:46</Clock>
        </Tray>
      </TaskBar>
    </Window>
  );
}
